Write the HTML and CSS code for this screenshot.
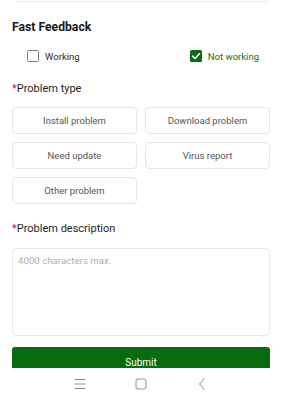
FILE: index.html
```html
<!DOCTYPE html>
<html>
<head>
<meta charset="utf-8">
<link rel="stylesheet" href="styles.css">
</head>
<body>
<div class="screen">
  <main class="content">
    <div class="prev-card"></div>
    <h2 class="title">Fast Feedback</h2>
    <div class="checks">
      <label class="check">
        <span class="box"></span>
        <span class="check-text">Working</span>
      </label>
      <label class="check checked">
        <span class="box">
          <svg width="12" height="12" viewBox="0 0 12 12"><path d="M2.6 6.2 L5 8.5 L9.4 3.8" fill="none" stroke="#fff" stroke-width="1.6" stroke-linecap="round" stroke-linejoin="round"/></svg>
        </span>
        <span class="check-text">Not working</span>
      </label>
    </div>
    <div class="label"><span class="req">*</span>Problem type</div>
    <div class="types">
      <div class="type">Install problem</div>
      <div class="type">Download problem</div>
      <div class="type">Need update</div>
      <div class="type">Virus report</div>
      <div class="type">Other problem</div>
    </div>
    <div class="label label-desc"><span class="req">*</span>Problem description</div>
    <textarea class="desc" placeholder="4000 characters max."></textarea>
    <div class="submit">Submit</div>
  </main>
  <nav class="navbar">
    <span class="nav-item">
      <svg width="12" height="12" viewBox="0 0 12 12"><path d="M0.5 1.5 H11.5 M0.5 6 H11.5 M0.5 10.5 H11.5" stroke="#8a8a8a" stroke-width="1"/></svg>
    </span>
    <span class="nav-item">
      <svg width="12" height="12" viewBox="0 0 12 12"><rect x="1" y="1" width="10" height="10" rx="2.2" fill="none" stroke="#8a8a8a" stroke-width="1"/></svg>
    </span>
    <span class="nav-item">
      <svg width="12" height="14" viewBox="0 0 12 14"><path d="M8.5 1 L3.5 7 L8.5 13" fill="none" stroke="#8a8a8a" stroke-width="1"/></svg>
    </span>
  </nav>
</div>
</body>
</html>
```

FILE: styles.css
```css
html, body {
  margin: 0;
  padding: 0;
  background: #fff;
}
body {
  font-family: Roboto, "Liberation Sans", sans-serif;
  color: #1e1e1e;
}
.screen {
  width: 282px;
  height: 400px;
  display: flex;
  flex-direction: column;
  overflow: hidden;
}
.content {
  flex: 1;
  min-height: 0;
  overflow: hidden;
  padding: 0 12px;
  display: flex;
  flex-direction: column;
}
.content > * {
  flex-shrink: 0;
}
.prev-card {
  height: 10px;
  margin-top: -10px;
  border: 1px solid #ededed;
  border-radius: 8px;
}
.title {
  margin: 17px 0 0;
  font-size: 12.2px;
  line-height: 16px;
  font-weight: 700;
  color: #1a1a1a;
}
.checks {
  margin-top: 11px;
  height: 20px;
  display: flex;
  align-items: center;
  justify-content: space-between;
  padding: 0 11px 0 15px;
}
.check {
  display: flex;
  align-items: center;
  gap: 6px;
  font-size: 9.5px;
}
.box {
  width: 12px;
  height: 12px;
  box-sizing: border-box;
  border: 1.2px solid #7a7a7a;
  border-radius: 1.5px;
  display: flex;
}
.checked .box {
  border: none;
  background: #0d6b17;
}
.check-text {
  color: #2a2a2a;
}
.checked .check-text {
  color: #1d6b22;
}
.label {
  margin-top: 15px;
  font-size: 11px;
  line-height: 16px;
  color: #1e1e1e;
}
.req {
  color: #b3261e;
}
.types {
  margin-top: 10px;
  display: grid;
  grid-template-columns: 1fr 1fr;
  column-gap: 8px;
  row-gap: 8px;
}
.type {
  height: 27px;
  box-sizing: border-box;
  border: 1px solid #e6e6e6;
  border-radius: 4px;
  display: flex;
  align-items: center;
  justify-content: center;
  font-size: 9.5px;
  color: #555;
}
.label-desc {
  margin-top: 17px;
}
.desc {
  margin: 11px 0 0;
  height: 88px;
  box-sizing: border-box;
  border: 1px solid #e8e8e8;
  border-radius: 4px;
  padding: 5px 5px;
  font-family: Roboto, "Liberation Sans", sans-serif;
  font-size: 9.7px;
  line-height: 14px;
  resize: none;
  outline: none;
  color: #333;
}
.desc::placeholder {
  color: #b0b0b0;
}
.submit {
  margin-top: 11px;
  height: 32px;
  line-height: 32px;
  background: #076b10;
  border-radius: 3px;
  color: #fff;
  text-align: center;
  font-size: 10px;
}
.navbar {
  flex: none;
  height: 32px;
  background: #fff;
  display: flex;
  align-items: center;
  justify-content: center;
  gap: 41px;
}
.nav-item {
  width: 20px;
  height: 20px;
  display: flex;
  align-items: center;
  justify-content: center;
}
```
